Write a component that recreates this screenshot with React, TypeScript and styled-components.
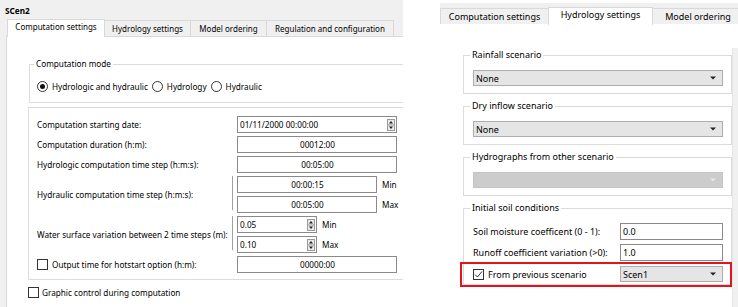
import React from "react";
import styled, { createGlobalStyle } from "styled-components";

const GlobalStyle = createGlobalStyle`
  * { box-sizing: border-box; }
  html, body { margin: 0; padding: 0; background: #ffffff; }
  body {
    font-family: "Noto Sans", "Liberation Sans", Arial, sans-serif;
    font-size: 8.2px;
    line-height: 11px;
    color: #000;
  }
`;

const Page = styled.div`
  display: flex;
  width: 738px;
  height: 307px;
  overflow: hidden;
  background: #fff;
`;

/* ---------- shared widgets ---------- */

const TabBar = styled.div<{ $height: number; $pad: number; $top?: number; $size?: number }>`
  display: flex;
  align-items: flex-end;
  height: ${(p) => p.$height}px;
  margin-top: ${(p) => p.$top ?? 0}px;
  padding-left: ${(p) => p.$pad}px;
  font-size: ${(p) => (p.$size ? `${p.$size}px` : "inherit")};
  background: #f0f0f0;
  flex-shrink: 0;
`;

const Tab = styled.div<{ $w: number; $active?: boolean }>`
  flex: 0 0 ${(p) => p.$w}px;
  text-align: center;
  white-space: nowrap;
  overflow: hidden;
  border: 1px solid #d9d9d9;
  border-bottom: none;
  margin-left: -1px;
  height: ${(p) => (p.$active ? 18 : 16)}px;
  line-height: ${(p) => (p.$active ? 14 : 15)}px;
  background: ${(p) => (p.$active ? "#ffffff" : "#f0f0f0")};
  margin-bottom: ${(p) => (p.$active ? -1 : 0)}px;
  position: relative;
  z-index: ${(p) => (p.$active ? 1 : 0)};
`;

const GroupBox = styled.fieldset<{ $pad: string; $mr?: number; $ml?: number; $mt?: number }>`
  margin: ${(p) => p.$mt ?? 0}px ${(p) => p.$mr ?? 0}px 0 ${(p) => p.$ml ?? 0}px;
  padding: ${(p) => p.$pad};
  border: 1px solid #dcdcdc;
  min-width: 0;
`;

const Legend = styled.legend`
  padding: 0 2px;
  margin-left: -3px;
  line-height: 10px;
  white-space: nowrap;
`;

const LineEdit = styled.div<{ $w: number; $left?: boolean }>`
  width: ${(p) => p.$w}px;
  height: 17px;
  border: 1px solid #8a8a8a;
  background: #fff;
  display: flex;
  align-items: center;
  justify-content: ${(p) => (p.$left ? "space-between" : "center")};
  padding: 0 1px 0 2px;
  white-space: nowrap;
`;

const Combo = styled.div<{ $w: number; $disabled?: boolean }>`
  width: ${(p) => p.$w}px;
  height: 16px;
  border: 1px solid ${(p) => (p.$disabled ? "#c4c4c4" : "#adadad")};
  background: ${(p) => (p.$disabled ? "#cccccc" : "#e5e5e5")};
  display: flex;
  align-items: center;
  justify-content: space-between;
  padding: 0 6px 0 2px;
`;

const Box = styled.span<{ $round?: boolean }>`
  flex: 0 0 11px;
  width: 11px;
  height: 11px;
  border: 1px solid #333;
  border-radius: ${(p) => (p.$round ? "50%" : "0")};
  background: #fff;
  display: inline-flex;
  align-items: center;
  justify-content: center;
`;

const Dot = styled.span`
  width: 5px;
  height: 5px;
  border-radius: 50%;
  background: #111;
`;

const Option = styled.label`
  display: flex;
  align-items: center;
  gap: 4px;
  white-space: nowrap;
`;

const Arrow = ({ color = "#222" }: { color?: string }) => (
  <svg width="6" height="4" viewBox="0 0 6 4">
    <path d="M0 0.5 H6 L3 3.5 Z" fill={color} />
  </svg>
);

const SpinArrows = () => (
  <svg width="8" height="12" viewBox="0 0 8 12">
    <rect x="0.5" y="0.5" width="7" height="11" fill="#eaeaea" stroke="#9a9a9a" />
    <line x1="0.5" y1="6" x2="7.5" y2="6" stroke="#9a9a9a" />
    <path d="M4 2 L6 4.5 H2 Z" fill="#222" />
    <path d="M4 10 L6 7.5 H2 Z" fill="#222" />
  </svg>
);

const Check = () => (
  <svg width="9" height="9" viewBox="0 0 9 9">
    <path d="M1 4.5 L3.5 7 L8 1.5" fill="none" stroke="#333" strokeWidth="1" />
  </svg>
);

/* ---------- left window ---------- */

const LeftWindow = styled.section`
  flex: 0 0 403px;
  display: flex;
  flex-direction: column;
  background: #f0f0f0;
  overflow: hidden;
`;

const TitleBar = styled.div`
  height: 18px;
  padding: 5px 0 0 5px;
  font-weight: bold;
  line-height: 12px;
`;

const LeftPane = styled.div`
  flex: 1;
  margin-left: 6px;
  background: #fff;
  border-left: 1px solid #d9d9d9;
  border-top: 1px solid #d9d9d9;
  padding: 22px 0 0 22px;
  overflow: hidden;
`;

const RadioRow = styled.div`
  display: flex;
  align-items: center;
  gap: 4px;
  height: 12px;
`;

const SettingsGrid = styled.div`
  display: grid;
  grid-template-columns: 200px auto;
  row-gap: 3px;
  align-items: center;
`;

const RowLabel = styled.div`
  white-space: nowrap;
`;

const Pair = styled.div`
  display: flex;
  flex-direction: column;
  gap: 3px;
  position: relative;

  &::before {
    content: "";
    position: absolute;
    left: -5px;
    top: 0;
    bottom: 3px;
    width: 1px;
    background: #a0a0a0;
  }
`;

const WithUnit = styled.div`
  display: flex;
  align-items: center;
  gap: 5px;
`;

const GraphicRow = styled(Option)`
  margin: 7px 0 0 -1px;
  gap: 3px;
`;

/* ---------- right window ---------- */

const RightWindow = styled.section`
  flex: 0 0 298px;
  margin-left: 37px;
  display: flex;
  flex-direction: column;
  background: #fff;
  overflow: hidden;
  font-size: 9px;
`;

const RightBody = styled.div`
  flex: 1;
  display: flex;
`;

const ScrollArea = styled.div`
  flex: 1;
  padding: 26px 0 0 23px;
  display: flex;
  flex-direction: column;
  gap: 7px;
`;

const ScrollStrip = styled.div`
  flex: 0 0 6px;
  margin-top: 24px;
  background: #f0f0f0;
  border-left: 1px solid #e6e6e6;
`;

const FormRows = styled.div`
  display: flex;
  flex-direction: column;
  gap: 4px;
`;

const FormRow = styled.div`
  display: grid;
  grid-template-columns: 147px 103px;
  align-items: center;
`;

const HighlightRow = styled(FormRow)`
  border: 2px solid #e3141b;
  margin: -3px -9px -3px -13px;
  padding: 2px 7px 3px 11px;
  position: relative;
`;

export default function App() {
  return (
    <>
      <GlobalStyle />
      <Page>
        <LeftWindow>
          <TitleBar>SCen2</TitleBar>
          <TabBar $height={18} $pad={8} $size={8}>
            <Tab $w={98} $active>Computation settings</Tab>
            <Tab $w={87}>Hydrology settings</Tab>
            <Tab $w={77}>Model ordering</Tab>
            <Tab $w={128}>Regulation and configuration</Tab>
          </TabBar>
          <LeftPane>
            <GroupBox $pad="11px 7px 10px 7px" $mr={-20}>
              <Legend>Computation mode</Legend>
              <RadioRow>
                <Option>
                  <Box $round>
                    <Dot />
                  </Box>
                  Hydrologic and hydraulic
                </Option>
                <Option>
                  <Box $round />
                  Hydrology
                </Option>
                <Option>
                  <Box $round />
                  Hydraulic
                </Option>
              </RadioRow>
            </GroupBox>

            <GroupBox $pad="8px 0 6px 8px" $mr={-20} $ml={-1} $mt={4}>
              <SettingsGrid>
                <RowLabel>Computation starting date:</RowLabel>
                <LineEdit $w={160} $left>
                  <span>01/11/2000 00:00:00</span>
                  <SpinArrows />
                </LineEdit>

                <RowLabel>Computation duration (h:m):</RowLabel>
                <LineEdit $w={160}>00012:00</LineEdit>

                <RowLabel>Hydrologic computation time step (h:m:s):</RowLabel>
                <LineEdit $w={160}>00:05:00</LineEdit>

                <RowLabel>Hydraulic computation time step (h:m:s):</RowLabel>
                <Pair>
                  <WithUnit>
                    <LineEdit $w={140}>00:00:15</LineEdit>
                    Min
                  </WithUnit>
                  <WithUnit>
                    <LineEdit $w={140}>00:05:00</LineEdit>
                    Max
                  </WithUnit>
                </Pair>

                <RowLabel>Water surface variation between 2 time steps (m):</RowLabel>
                <Pair>
                  <WithUnit>
                    <LineEdit $w={80} $left>
                      <span>0.05</span>
                      <SpinArrows />
                    </LineEdit>
                    Min
                  </WithUnit>
                  <WithUnit>
                    <LineEdit $w={80} $left>
                      <span>0.10</span>
                      <SpinArrows />
                    </LineEdit>
                    Max
                  </WithUnit>
                </Pair>

                <Option>
                  <Box />
                  Output time for hotstart option (h:m):
                </Option>
                <LineEdit $w={160}>00000:00</LineEdit>
              </SettingsGrid>
            </GroupBox>

            <GraphicRow>
              <Box />
              Graphic control during computation
            </GraphicRow>
          </LeftPane>
        </LeftWindow>

        <RightWindow>
          <TabBar $height={21} $pad={1} $top={3}>
            <Tab $w={109}>Computation settings</Tab>
            <Tab $w={105} $active>Hydrology settings</Tab>
            <Tab $w={92}>Model ordering</Tab>
          </TabBar>
          <RightBody>
            <ScrollArea>
              <GroupBox $pad="10px 8px 7px 9px">
                <Legend>Rainfall scenario</Legend>
                <Combo $w={250}>
                  None
                  <Arrow />
                </Combo>
              </GroupBox>

              <GroupBox $pad="10px 8px 7px 9px">
                <Legend>Dry inflow scenario</Legend>
                <Combo $w={250}>
                  None
                  <Arrow />
                </Combo>
              </GroupBox>

              <GroupBox $pad="10px 8px 7px 9px">
                <Legend>Hydrographs from other scenario</Legend>
                <Combo $w={250} $disabled>
                  <span />
                  <Arrow color="#e8e8e8" />
                </Combo>
              </GroupBox>

              <GroupBox $pad="10px 8px 0 9px">
                <Legend>Initial soil conditions</Legend>
                <FormRows>
                  <FormRow>
                    <RowLabel>Soil moisture coefficent (0 - 1):</RowLabel>
                    <LineEdit $w={103} $left>
                      <span>0.0</span>
                    </LineEdit>
                  </FormRow>
                  <FormRow>
                    <RowLabel>Runoff coefficient variation (&gt;0):</RowLabel>
                    <LineEdit $w={103} $left>
                      <span>1.0</span>
                    </LineEdit>
                  </FormRow>
                  <HighlightRow>
                    <Option>
                      <Box>
                        <Check />
                      </Box>
                      From previous scenario
                    </Option>
                    <Combo $w={103}>
                      Scen1
                      <Arrow />
                    </Combo>
                  </HighlightRow>
                </FormRows>
              </GroupBox>
            </ScrollArea>
            <ScrollStrip />
          </RightBody>
        </RightWindow>
      </Page>
    </>
  );
}
